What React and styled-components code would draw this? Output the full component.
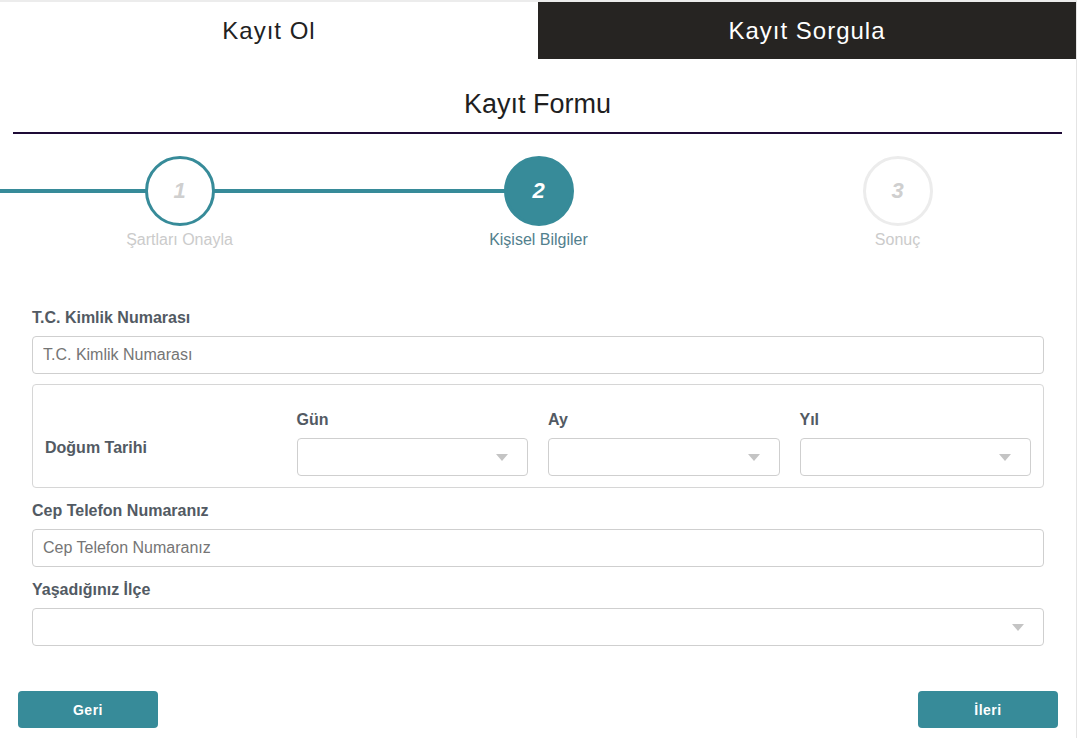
import React from "react";
import styled, { createGlobalStyle } from "styled-components";

const GlobalStyle = createGlobalStyle`
  html, body { margin: 0; padding: 0; background: #fff; }
  body { font-family: "Liberation Sans", Arial, sans-serif; }
  * { box-sizing: border-box; }
`;

const TEAL = "#378b99";

const Page = styled.div`
  width: 1077px;
  min-height: 738px;
  border-top: 2px solid #ececec;
  border-right: 1px solid #e4e4e4;
  background: #fff;
`;

const Tabs = styled.div`
  display: grid;
  grid-template-columns: 538px 1fr;
  height: 57px;
`;

const Tab = styled.div`
  display: flex;
  align-items: center;
  justify-content: center;
  font-size: 24px;
  letter-spacing: 1px;
  background: ${(p) => (p.$active ? "#fff" : "#262422")};
  color: ${(p) => (p.$active ? "#222" : "#fff")};
  padding-top: 1px;
`;

const TitleBar = styled.div`
  margin: 0 14px 0 13px;
  padding-top: 29px;
  padding-bottom: 12px;
  border-bottom: 2px solid #1e0b36;
  text-align: center;
  font-size: 27px;
  line-height: 32px;
  color: #1f1f1f;
`;

const Stepper = styled.div`
  display: grid;
  grid-template-columns: repeat(3, 1fr);
  width: 1077px;
  margin-top: 22px;
`;

const Step = styled.div`
  position: relative;
  display: flex;
  flex-direction: column;
  align-items: center;
`;

const Line = styled.div`
  position: absolute;
  top: 33px;
  height: 4px;
  background: ${TEAL};
  left: ${(p) => (p.$side === "before" ? "0" : "50%")};
  width: 50%;
`;

const Circle = styled.div`
  position: relative;
  z-index: 1;
  width: 70px;
  height: 70px;
  border-radius: 50%;
  display: flex;
  align-items: center;
  justify-content: center;
  font-size: 22px;
  font-weight: bold;
  font-style: italic;
  border: 3px solid ${(p) => (p.$state === "todo" ? "#ececec" : TEAL)};
  background: ${(p) => (p.$state === "active" ? TEAL : "#fff")};
  color: ${(p) => (p.$state === "active" ? "#fff" : "#cfcfcf")};
`;

const StepLabel = styled.div`
  margin-top: 5px;
  font-size: 16px;
  line-height: 18px;
  color: ${(p) => (p.$state === "active" ? "#52808d" : "#cbcbcb")};
`;

const Form = styled.div`
  padding: 60px 32px 0 32px;
  display: flex;
  flex-direction: column;
`;

const Label = styled.div`
  font-size: 16px;
  font-weight: bold;
  color: #525a63;
  line-height: 18px;
  margin-bottom: 9px;
`;

const Field = styled.div`
  margin-bottom: ${(p) => p.$mb ?? 14}px;
`;

const Input = styled.input`
  display: block;
  width: 100%;
  height: 38px;
  border: 1px solid #cfcfcf;
  border-radius: 4px;
  padding: 0 10px;
  font-family: "Liberation Sans", Arial, sans-serif;
  font-size: 16px;
  color: #333;
  outline: none;
  &::placeholder { color: #757575; }
`;

const SelectBox = styled.div`
  position: relative;
  height: 38px;
  border: 1px solid #cfcfcf;
  border-radius: 4px;
  background: #fff;
`;

const Arrow = styled.span`
  position: absolute;
  right: 19px;
  top: 15px;
  width: 0;
  height: 0;
  border-left: 6px solid transparent;
  border-right: 6px solid transparent;
  border-top: 7px solid #c4c4c4;
`;

const DateBox = styled.div`
  border: 1px solid #d6d6d6;
  border-radius: 4px;
  padding: 26px 12px 11px 12px;
  display: grid;
  grid-template-columns: repeat(4, 1fr);
  column-gap: 20px;
  align-items: end;
  margin-bottom: 14px;
`;

const DateLabel = styled.div`
  font-size: 16px;
  font-weight: bold;
  color: #525a63;
  align-self: start;
  margin-top: 28px;
`;

const Buttons = styled.div`
  display: flex;
  justify-content: space-between;
  padding: 45px 18px 0 18px;
`;

const Button = styled.button`
  width: 140px;
  height: 37px;
  border: none;
  border-radius: 4px;
  background: ${TEAL};
  color: #fff;
  font-family: "Liberation Sans", Arial, sans-serif;
  font-weight: bold;
  font-size: 14px;
  letter-spacing: 0.5px;
  cursor: pointer;
`;

const Select = () => (
  <SelectBox>
    <Arrow />
  </SelectBox>
);

const steps = [
  { n: 1, label: "Şartları Onayla", state: "done", before: true, after: true },
  { n: 2, label: "Kişisel Bilgiler", state: "active", before: true, after: false },
  { n: 3, label: "Sonuç", state: "todo", before: false, after: false },
];

export default function App() {
  return (
    <>
      <GlobalStyle />
      <Page>
        <Tabs>
          <Tab $active>Kayıt Ol</Tab>
          <Tab>Kayıt Sorgula</Tab>
        </Tabs>
        <TitleBar>Kayıt Formu</TitleBar>
        <Stepper>
          {steps.map((s) => (
            <Step key={s.n}>
              {s.before && <Line $side="before" />}
              {s.after && <Line $side="after" />}
              <Circle $state={s.state}>{s.n}</Circle>
              <StepLabel $state={s.state}>{s.label}</StepLabel>
            </Step>
          ))}
        </Stepper>
        <Form>
          <Field $mb={10}>
            <Label>T.C. Kimlik Numarası</Label>
            <Input placeholder="T.C. Kimlik Numarası" />
          </Field>
          <DateBox>
            <DateLabel>Doğum Tarihi</DateLabel>
            <div>
              <Label>Gün</Label>
              <Select />
            </div>
            <div>
              <Label>Ay</Label>
              <Select />
            </div>
            <div>
              <Label>Yıl</Label>
              <Select />
            </div>
          </DateBox>
          <Field>
            <Label>Cep Telefon Numaranız</Label>
            <Input placeholder="Cep Telefon Numaranız" />
          </Field>
          <Field $mb={0}>
            <Label>Yaşadığınız İlçe</Label>
            <Select />
          </Field>
        </Form>
        <Buttons>
          <Button>Geri</Button>
          <Button>İleri</Button>
        </Buttons>
      </Page>
    </>
  );
}
